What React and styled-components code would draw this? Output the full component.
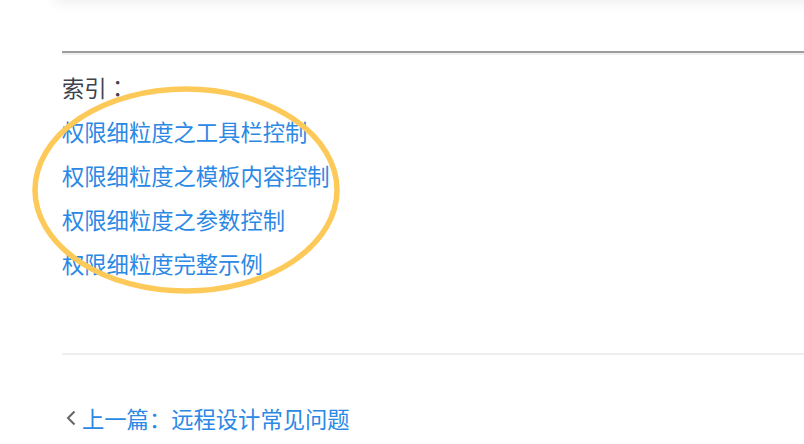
import React from 'react'
import styled, { createGlobalStyle } from 'styled-components'

const GlobalStyle = createGlobalStyle`
  html, body {
    margin: 0;
    padding: 0;
    background: #fff;
    overflow: hidden;
  }
  body {
    font-family: "Noto Sans CJK SC", "Noto Sans", sans-serif;
  }
`

const links = [
  '权限细粒度之工具栏控制',
  '权限细粒度之模板内容控制',
  '权限细粒度之参数控制',
  '权限细粒度完整示例',
]

const App = () => {
  return (
    <>
      <GlobalStyle />
      <Page>
        <Card />
        <Rule />
        <Index>
          <Label>索引：</Label>
          {links.map((text) => (
            <Link key={text} href="#">{text}</Link>
          ))}
          <Circle width="310" height="212" viewBox="0 0 310 212">
            <ellipse cx="155" cy="106" rx="151" ry="101" fill="none" stroke="#fdca59" strokeWidth="5.5" />
          </Circle>
        </Index>
        <FooterRule />
        <Prev href="#">
          <svg width="10" height="16" viewBox="0 0 10 16">
            <path d="M8.5 1.5 L2 8 L8.5 14.5" fill="none" stroke="#666" strokeWidth="2" />
          </svg>
          <span>上一篇：远程设计常见问题</span>
        </Prev>
      </Page>
    </>
  )
}

export default App

const Page = styled.div`
  width: 804px;
  height: 444px;
  padding-left: 62px;
  box-sizing: border-box;
  display: flex;
  flex-direction: column;
  overflow: hidden;
`

const Card = styled.div`
  height: 40px;
  margin-top: -40px;
  margin-left: -8px;
  margin-right: -40px;
  background: #fff;
  border-radius: 4px;
  box-shadow: 0 3px 14px rgba(0, 0, 0, 0.07);
`

const Rule = styled.div`
  margin-top: 51px;
  margin-right: -10px;
  border-top: 2px solid #9d9d9d;
  border-bottom: 2px solid #efefef;
`

const Index = styled.div`
  position: relative;
  margin-top: 10px;
  display: flex;
  flex-direction: column;
  align-items: flex-start;
  font-size: 22.3px;
  line-height: 44px;
`

const Label = styled.div`
  color: #3d434d;
  font-family: "Noto Sans CJK TC", "Noto Sans CJK SC", sans-serif;
`

const Link = styled.a`
  color: #2b88e5;
  text-decoration: none;
`

const Circle = styled.svg`
  position: absolute;
  left: -31px;
  top: 19px;
  pointer-events: none;
`

const FooterRule = styled.div`
  margin-top: 68px;
  margin-right: -10px;
  border-top: 2px solid #eeeeee;
`

const Prev = styled.a`
  margin-top: 41px;
  display: flex;
  align-items: center;
  gap: 6px;
  padding-left: 4px;
  font-size: 22.3px;
  line-height: 44px;
  color: #2b88e5;
  text-decoration: none;
`
